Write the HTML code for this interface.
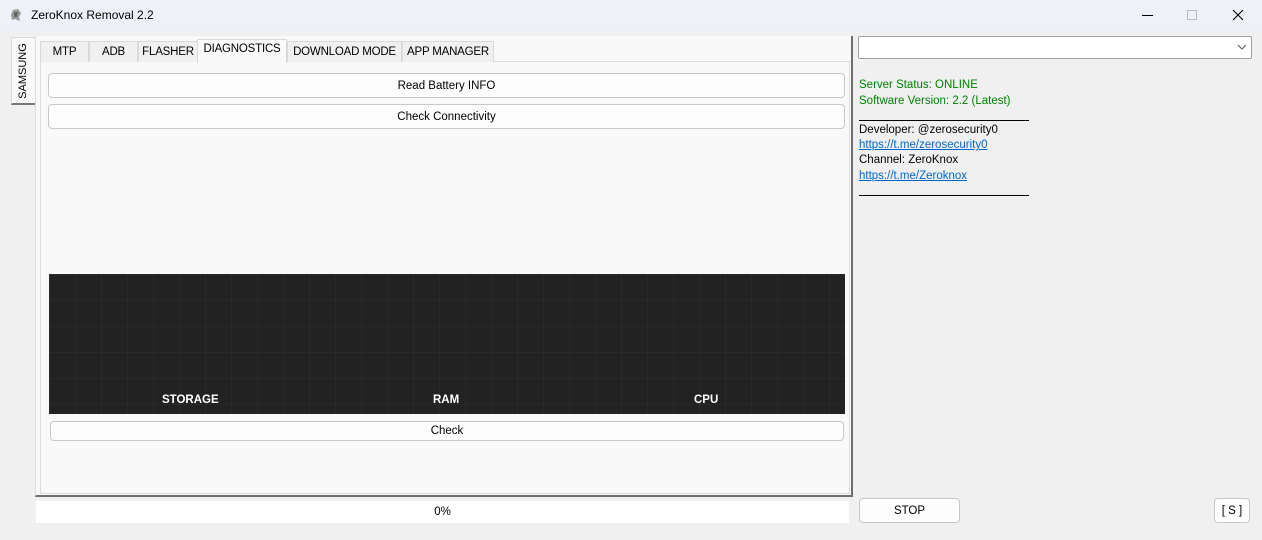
<!DOCTYPE html>
<html><head><meta charset="utf-8"><style>
*{box-sizing:border-box;margin:0;padding:0}
body{width:1262px;height:540px;overflow:hidden;background:#f0f0f0;font-family:"Segoe UI","Liberation Sans",sans-serif;font-size:11.5px;color:#000;position:relative}
.abs{position:absolute;white-space:nowrap}
.title{left:0;top:0;width:1262px;height:31px;background:#eef1f7}
.btn{position:absolute;background:#fdfdfd;border:1px solid #c8c8c8;border-radius:4px;text-align:center;font-size:11.5px;white-space:nowrap}
.tab{position:absolute;top:41px;height:21px;background:#f0f0f0;border:1px solid #d9d9d9;border-bottom:none;font-size:11.5px;padding-top:4px;text-align:center;white-space:nowrap;overflow:hidden;letter-spacing:-0.2px}
.lbl{position:absolute;color:#fff;font-weight:bold;font-size:11.5px}
a{color:#0066cc;text-decoration:underline}
</style></head><body>
<div class="abs title"></div>
<svg class="abs" style="left:9px;top:8px" width="14" height="14" viewBox="0 0 14 14"><path d="M4 2 L9 1 L12 5 L10 9 L11 13 L6 11 L3 12 L2 7 Z" fill="#9a9a9a"/><path d="M5 4 L9 4 L8 9 L5 9 Z" fill="#666"/></svg>
<div class="abs" style="left:31px;top:8px;font-size:12px">ZeroKnox Removal 2.2</div>
<div class="abs" style="left:1142px;top:15px;width:11px;height:1px;background:#000"></div>
<div class="abs" style="left:1187px;top:10px;width:10px;height:10px;border:1px solid #bbb"></div>
<svg class="abs" style="left:1232px;top:9px" width="12" height="12" viewBox="0 0 12 12"><path d="M1 1L11 11M11 1L1 11" stroke="#000" stroke-width="1.1"/></svg>

<div class="abs" style="left:11px;top:37px;width:25px;height:68px;background:#f9f9f9;border:1px solid #d9d9d9;border-bottom:2px solid #777"></div>
<div class="abs" style="left:23px;top:71px;transform:translate(-50%,-50%) rotate(-90deg);font-size:11px">SAMSUNG</div>

<div class="abs" style="left:35px;top:36px;width:818px;height:461px;background:#f9f9f9;border-right:2px solid #6e6e6e;border-bottom:2px solid #6e6e6e;border-left:1px solid #ddd"></div>
<div class="abs" style="left:40px;top:61px;width:810px;height:433px;background:#f9f9f9;border:1px solid #dcdcdc"></div>

<div class="tab" style="left:40px;width:49px">MTP</div>
<div class="tab" style="left:89px;width:49px">ADB</div>
<div class="tab" style="left:138px;width:60px">FLASHER</div>
<div class="tab" style="left:197px;top:39px;height:24px;width:90px;background:#f9f9f9;padding-top:3px">DIAGNOSTICS</div>
<div class="tab" style="left:287px;width:115px">DOWNLOAD MODE</div>
<div class="tab" style="left:402px;width:92px">APP MANAGER</div>

<div class="btn" style="left:48px;top:73px;width:797px;height:25px;line-height:24px">Read Battery INFO</div>
<div class="btn" style="left:48px;top:104px;width:797px;height:25px;line-height:24px">Check Connectivity</div>

<div class="abs" style="left:49px;top:274px;width:796px;height:140px;background:#222;background-image:linear-gradient(90deg,rgba(255,255,255,.03) 1px,transparent 1px),linear-gradient(rgba(255,255,255,.03) 1px,transparent 1px);background-size:26px 26px"></div>
<div class="lbl" style="left:162px;top:394px">STORAGE</div>
<div class="lbl" style="left:433px;top:394px">RAM</div>
<div class="lbl" style="left:694px;top:394px">CPU</div>
<div class="btn" style="left:50px;top:421px;width:794px;height:20px;line-height:19px">Check</div>

<div class="abs" style="left:36px;top:501px;width:813px;height:22px;background:#fff;text-align:center;line-height:23px">0%</div>

<div class="abs" style="left:858px;top:36px;width:394px;height:23px;background:#fff;border:1px solid #a0a0a0;border-radius:2px"></div>
<svg class="abs" style="left:1237px;top:44px" width="10" height="7" viewBox="0 0 10 7"><path d="M1 1L5 5L9 1" stroke="#555" fill="none" stroke-width="1"/></svg>
<div class="abs" style="left:859px;top:78px;color:#008000;line-height:15.5px">Server Status: ONLINE<br>Software Version: 2.2 (Latest)</div>
<div class="abs" style="left:859px;top:120px;width:170px;height:1px;background:#000"></div>
<div class="abs" style="left:859px;top:123px;line-height:15.2px">Developer: @zerosecurity0<br><a>https://t.me/zerosecurity0</a><br>Channel: ZeroKnox<br><a>https://t.me/Zeroknox</a></div>
<div class="abs" style="left:859px;top:195px;width:170px;height:1px;background:#000"></div>

<div class="btn" style="left:859px;top:498px;width:101px;height:25px;line-height:24px">STOP</div>
<div class="btn" style="left:1214px;top:498px;width:36px;height:25px;line-height:24px">[ S ]</div>
</body></html>
